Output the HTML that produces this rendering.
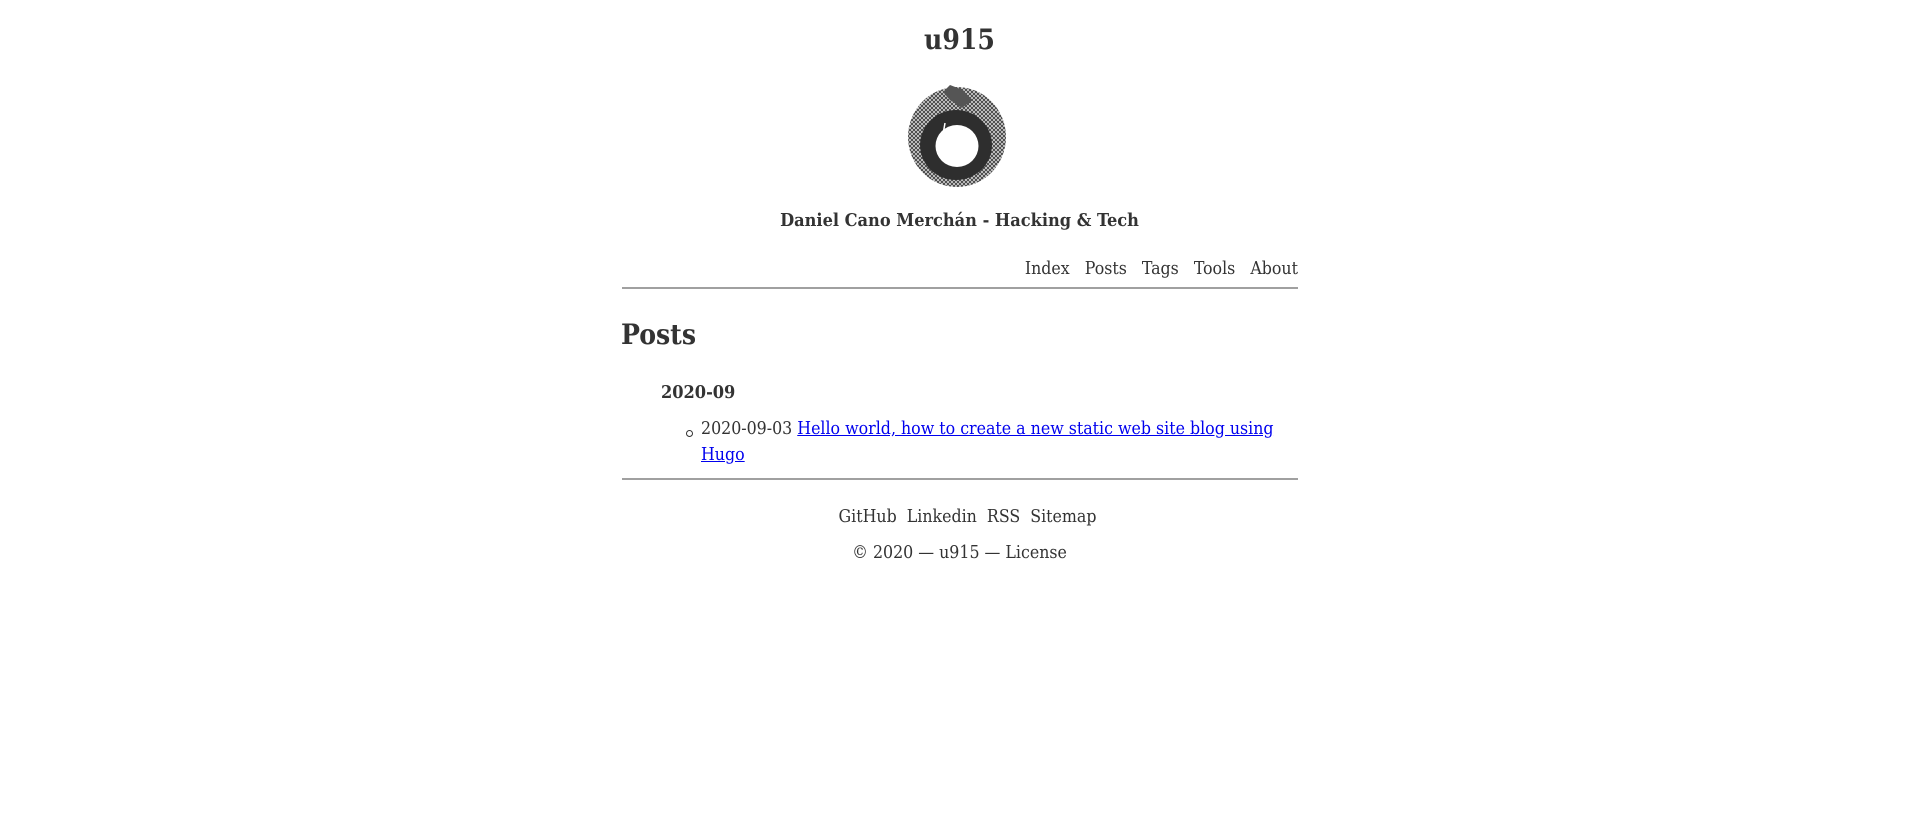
<!DOCTYPE html>
<html><head><meta charset="utf-8"><style>
html,body{margin:0;padding:0;background:#fff;}
body{font-family:"DejaVu Serif","Liberation Serif",serif;font-stretch:condensed;color:#333;width:1919px;height:814px;overflow:hidden;position:relative;font-size:17.6px;}
.a{position:absolute;white-space:nowrap;line-height:1;}
.c{left:0;width:1919px;text-align:center;}
hr{position:absolute;left:622px;width:676px;margin:0;border:0;border-top:2px solid #a0a0a0;height:0;}
a.l{color:#00e;text-decoration:underline;}
</style></head><body>
<div class="a c" style="top:26px;font-size:28px;font-weight:bold;">u915</div>
<svg class="a" style="left:900px;top:80px" width="120" height="115" viewBox="900 80 120 115">
<defs><pattern id="p" width="4" height="4" patternUnits="userSpaceOnUse"><rect width="4" height="4" fill="#e4e4e4"/><path d="M0 0L4 4M4 0L0 4" stroke="#444" stroke-width="1"/></pattern></defs>
<ellipse cx="957" cy="137" rx="49" ry="50" fill="url(#p)"/>
<ellipse cx="956" cy="145" rx="36" ry="35" fill="#2e2e2e"/>
<ellipse cx="957" cy="146" rx="21.5" ry="21" fill="#fff"/>
<path d="M943 92 L950 85 L963 90 L972 100 L962 108 L950 100 Z" fill="#555"/>
<path d="M945 123 L942 140 L946 138" stroke="#fff" fill="none" stroke-width="1.5"/>
</svg>
<div class="a c" style="top:212px;font-size:18px;font-weight:bold;">Daniel Cano Merchán - Hacking &amp; Tech</div>
<div class="a" style="right:621px;top:261px;font-size:17.6px;">Index&nbsp;&nbsp; Posts&nbsp;&nbsp; Tags&nbsp;&nbsp; Tools&nbsp;&nbsp; About</div>
<hr style="top:287px">
<div class="a" style="left:621px;top:321px;font-size:28px;font-weight:bold;">Posts</div>
<div class="a" style="left:661px;top:384px;font-size:18px;font-weight:bold;">2020-09</div>
<div class="a" style="left:685px;top:425px;width:9px;height:9px;"><svg width="9" height="9"><circle cx="4.5" cy="4.5" r="3" fill="none" stroke="#333" stroke-width="1"/></svg></div>
<div class="a" style="left:701px;top:421px;">2020-09-03 <a class="l">Hello world, how to create a new static web site blog using</a></div>
<div class="a" style="left:701px;top:447px;"><a class="l">Hugo</a></div>
<hr style="top:478px">
<div class="a c" style="top:509px;padding-left:8px;">GitHub&nbsp; Linkedin&nbsp; RSS&nbsp; Sitemap</div>
<div class="a c" style="top:545px;">© 2020 — u915 — License</div>
</body></html>
